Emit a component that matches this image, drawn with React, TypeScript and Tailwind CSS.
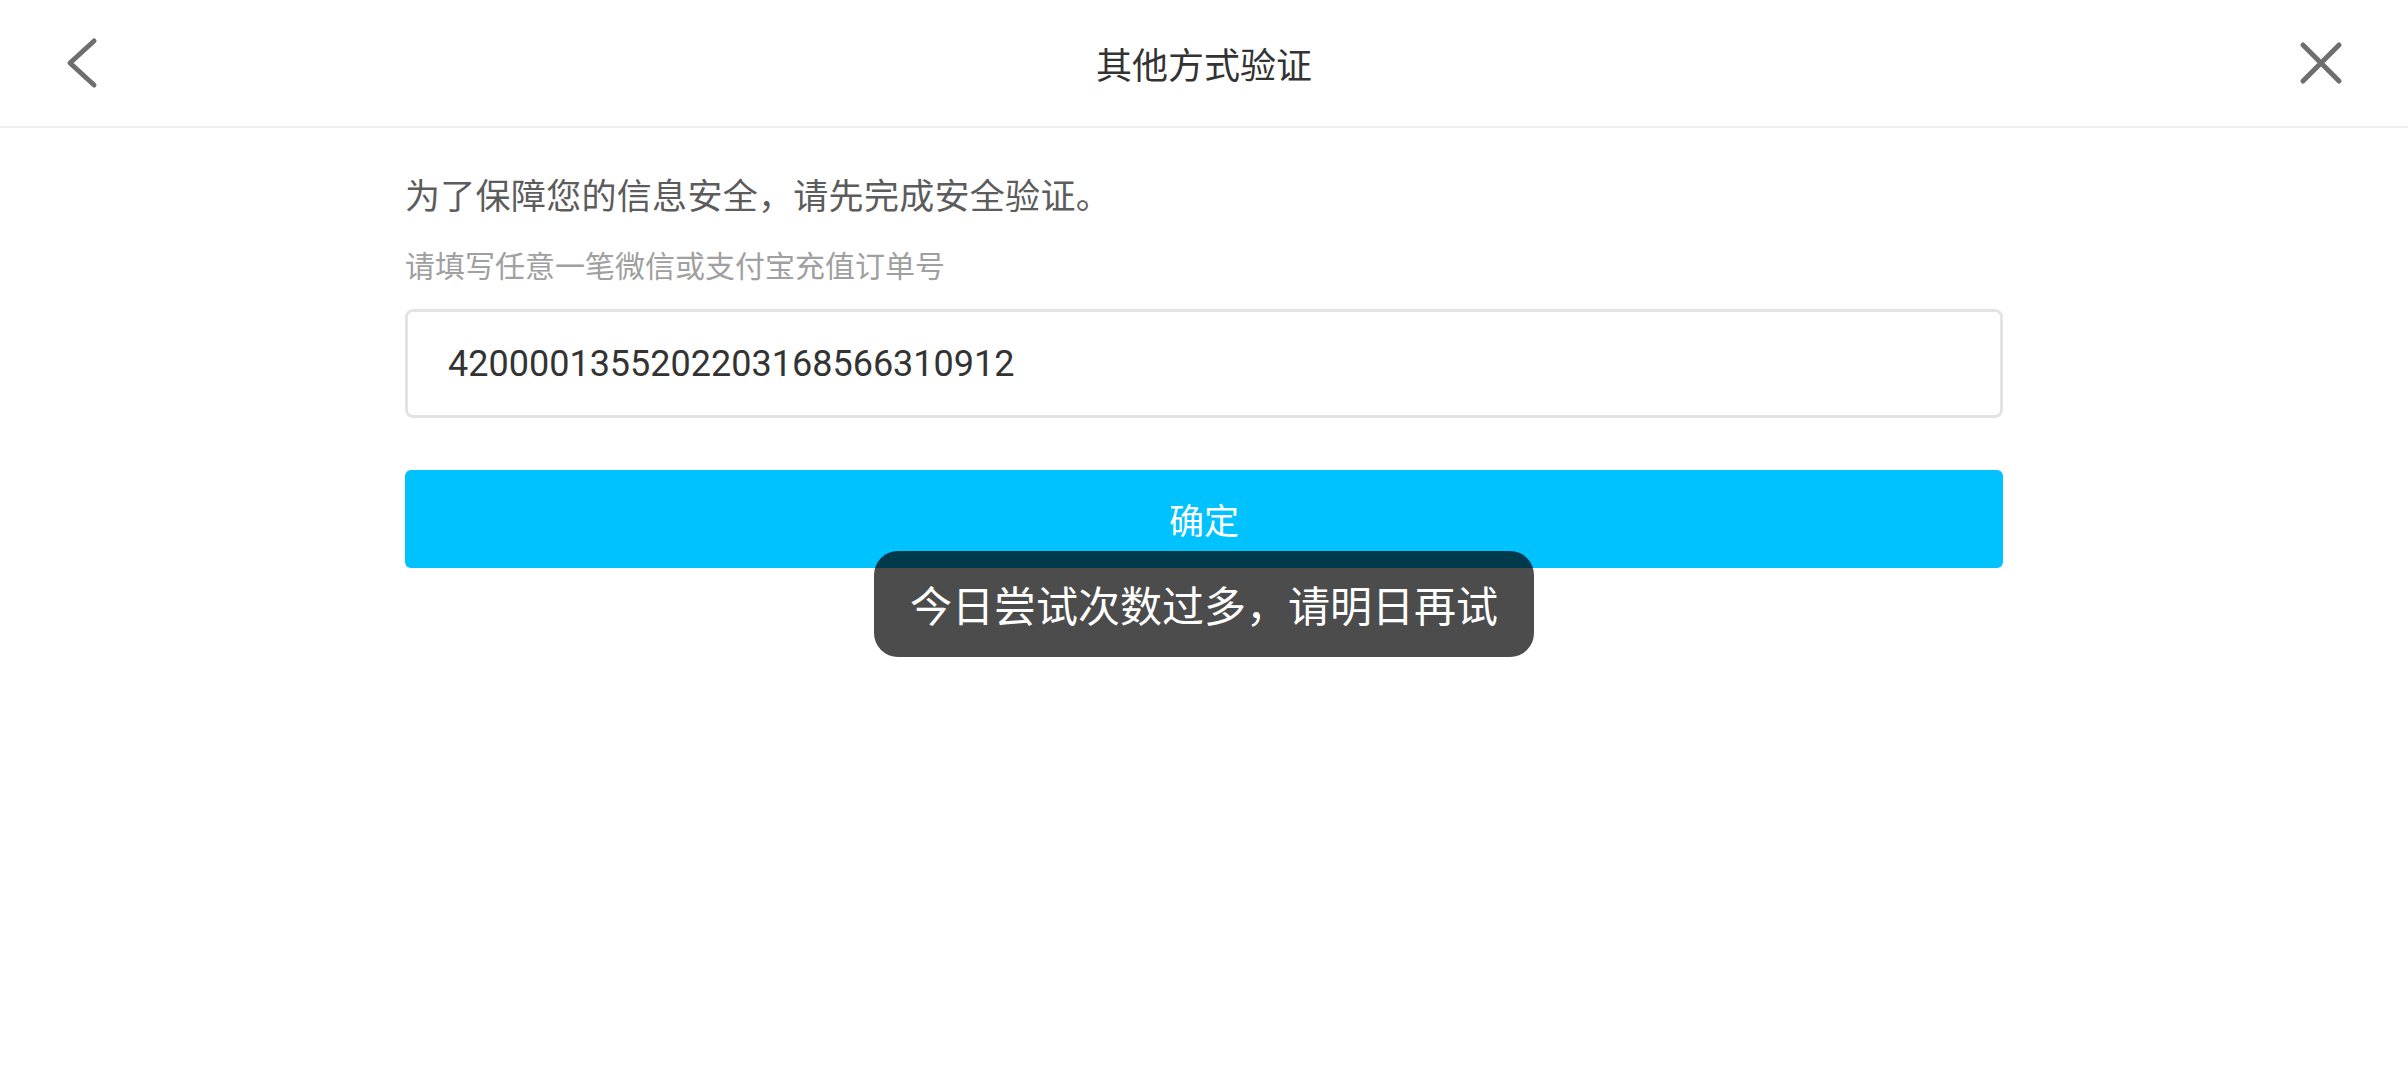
const cjk = { fontFamily: '"Noto Sans CJK SC", "Noto Sans", sans-serif' };
const num = { fontFamily: 'Roboto, "Noto Sans CJK SC", sans-serif' };

const BackIcon = () => (
  <svg width="34" height="56" viewBox="0 0 34 56" fill="none">
    <polyline
      points="30,6 6,28 30,50"
      stroke="#6e6e6e"
      strokeWidth="5"
      strokeLinecap="round"
      strokeLinejoin="round"
    />
  </svg>
);

const CloseIcon = () => (
  <svg width="46" height="46" viewBox="0 0 46 46" fill="none">
    <path d="M5 5 L41 41 M41 5 L5 41" stroke="#6e6e6e" strokeWidth="5" strokeLinecap="round" />
  </svg>
);

const App = () => {
  return (
    <div className="relative min-h-[1080px] w-full bg-white" style={cjk}>
      <header className="grid h-[128px] grid-cols-[1fr_auto_1fr] items-center border-b-2 border-[#eeeeee] px-[64px]">
        <div className="flex items-center">
          <BackIcon />
        </div>
        <h1 className="text-[36px] leading-none text-[#333333]">其他方式验证</h1>
        <div className="flex items-center justify-end">
          <CloseIcon />
        </div>
      </header>

      <main className="mx-auto flex w-[1598px] flex-col">
        <p className="mt-[41px] text-[35px] leading-[50px] tracking-[0.3px] text-[#5c5c5c]">
          为了保障您的信息安全，请先完成安全验证。
        </p>
        <p className="mt-[25px] text-[30px] leading-[40px] text-[#a0a0a0]">
          请填写任意一笔微信或支付宝充值订单号
        </p>
        <div className="mt-[25px] flex h-[109px] items-center rounded-[8px] border-[3px] border-[#e3e3e3] px-[40px]">
          <span className="text-[36px] text-[#333333]" style={num}>
            4200001355202203168566310912
          </span>
        </div>
        <button className="mt-[52px] flex h-[98px] items-center justify-center rounded-[6px] bg-[#00c2ff] text-[35px] text-white">
          确定
        </button>
      </main>

      <div className="absolute left-1/2 top-[551px] flex h-[106px] -translate-x-1/2 items-center rounded-[24px] bg-black/70 px-[36px]">
        <span className="whitespace-nowrap text-[42px] leading-none text-white">今日尝试次数过多，请明日再试</span>
      </div>
    </div>
  );
};

export default App;
